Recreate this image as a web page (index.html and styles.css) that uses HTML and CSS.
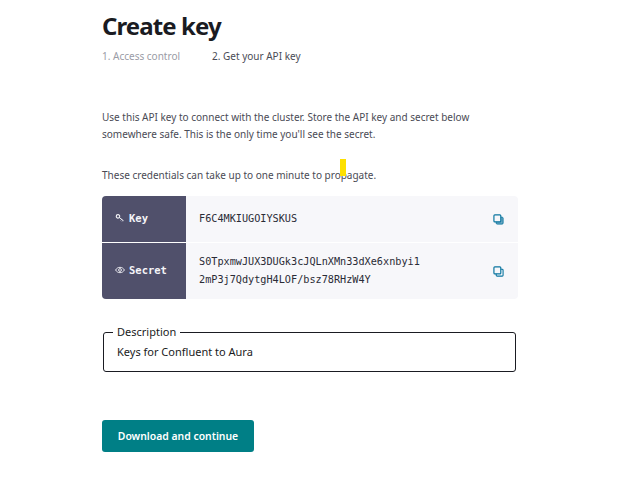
FILE: index.html
```html
<!DOCTYPE html>
<html>
<head>
    <title>Create key</title>
    <link rel="stylesheet" href="styles.css">
</head>
<body>
    <div class="container">
        <h1>Create key</h1>
        <div class="steps">
            <span class="step step-done">1. Access control</span>
            <span class="step">2. Get your API key</span>
        </div>

        <p class="intro">Use this API key to connect with the cluster. Store the API key and secret below somewhere safe. This is the only time you'll see the secret.</p>
        <p class="note">These credentials can take up to one minute to propagate.</p>
        <span class="marker"></span>

        <div class="creds">
            <div class="cred-row cred-key">
                <div class="cred-label">
                    <svg class="label-icon" viewBox="0 0 12 12"><circle cx="3.6" cy="4" r="2.1" fill="none" stroke="currentColor" stroke-width="1.3"/><path d="M5.2 5.4 10 9.2M8 7.6 6.9 8.8M9.6 8.9 8.6 10" fill="none" stroke="currentColor" stroke-width="1.2"/></svg>
                    <span>Key</span>
                </div>
                <div class="cred-value">F6C4MKIUGOIYSKUS</div>
                <svg class="copy-icon" viewBox="0 0 12 12"><rect x="3.5" y="3.5" width="7.5" height="7.5" rx="1" fill="#6fa9c4" stroke="#0b76a0" stroke-width="1"/><rect x="1" y="1" width="7.5" height="7.5" rx="1" fill="#f7f7fa" stroke="#0b76a0" stroke-width="1.3"/></svg>
            </div>
            <div class="cred-row cred-secret">
                <div class="cred-label">
                    <svg class="label-icon" viewBox="0 0 12 12"><path d="M.7 6C2 3.800 3.900 2.800 6 2.800S10 3.800 11.300 6C10 8.200 8.100 9.200 6 9.200S2 8.200.7 6Z" fill="none" stroke="currentColor" stroke-width="1.100"/><circle cx="6" cy="6" r="1.700" fill="none" stroke="currentColor" stroke-width="1.100"/></svg>
                    <span>Secret</span>
                </div>
                <div class="cred-value">S0TpxmwJUX3DUGk3cJQLnXMn33dXe6xnbyi1<br>2mP3j7QdytgH4LOF/bsz78RHzW4Y</div>
                <svg class="copy-icon" viewBox="0 0 12 12"><rect x="3.5" y="3.5" width="7.5" height="7.5" rx="1" fill="#f7f7fa" stroke="#0b76a0" stroke-width="1.200"/><rect x="1" y="1" width="7.5" height="7.500" rx="1" fill="#f7f7fa" stroke="#0b76a0" stroke-width="1.300"/></svg>
            </div>
        </div>

        <fieldset class="desc">
            <legend>Description</legend>
            <div class="desc-text">Keys for Confluent to Aura</div>
        </fieldset>

        <button class="btn" type="button">Download and continue</button>
    </div>
</body>
</html>
```

FILE: styles.css
```css
body {
    margin: 0;
    background: #fff;
    color: #1a1b22;
    font-family: "Noto Sans", sans-serif;
}

.container {
    position: relative;
    width: 416px;
    margin-left: 102px;
}

h1 {
    margin: 0;
    padding-top: 9px;
    font-size: 24px;
    line-height: 33px;
    font-weight: 700;
    letter-spacing: -0.9px;
}

.steps {
    display: flex;
    margin-top: 6px;
    font-size: 10px;
    line-height: 17px;
    color: #4a4b55;
}

.step {
    margin-right: 32px;
}

.step-done {
    color: #9a9ca6;
}

.intro,
.note {
    font-size: 10px;
    line-height: 17px;
    color: #4a4b55;
}

.intro {
    margin: 44px 0 0;
}

.note {
    margin: 24px 0 0;
}

.marker {
    position: absolute;
    left: 238px;
    top: 159px;
    width: 6px;
    height: 17px;
    background: #fde000;
}

.creds {
    margin-top: 12px;
    border-radius: 4px;
    overflow: hidden;
    background: #f7f7fa;
}

.cred-row {
    display: flex;
    align-items: center;
}

.cred-key {
    height: 46px;
    border-bottom: 1px solid #fff;
}

.cred-secret {
    height: 56px;
}

.cred-label {
    display: flex;
    align-items: center;
    gap: 4px;
    align-self: stretch;
    box-sizing: border-box;
    width: 84px;
    padding: 0 0 2px 13px;
    background: #50506b;
    color: #f4f4f8;
    font-family: "DejaVu Sans Mono", monospace;
    font-size: 10.5px;
    font-weight: 700;
}

.label-icon {
    width: 10px;
    height: 10px;
}

.cred-value {
    flex: 1;
    padding-left: 13px;
    font-family: "DejaVu Sans Mono", monospace;
    font-size: 10.2px;
    line-height: 18px;
    color: #2a2b36;
}

.copy-icon {
    width: 11px;
    height: 11px;
    margin-right: 14px;
}

.desc {
    box-sizing: border-box;
    width: 413px;
    height: 47px;
    margin: 26px 0 0 1px;
    padding: 4px 13px 0;
    border: 1px solid #1a1b22;
    border-radius: 3px;
}

.desc legend {
    padding: 0 4px;
    margin-left: -4px;
    font-size: 11px;
    line-height: 14px;
}

.desc-text {
    font-size: 11px;
    line-height: 18px;
}

.btn {
    display: block;
    width: 152px;
    height: 32px;
    margin-top: 48px;
    border: 0;
    border-radius: 3px;
    background: #007f86;
    color: #fff;
    font-family: "Noto Sans", sans-serif;
    font-size: 10.4px;
    font-weight: 600;
}
```
